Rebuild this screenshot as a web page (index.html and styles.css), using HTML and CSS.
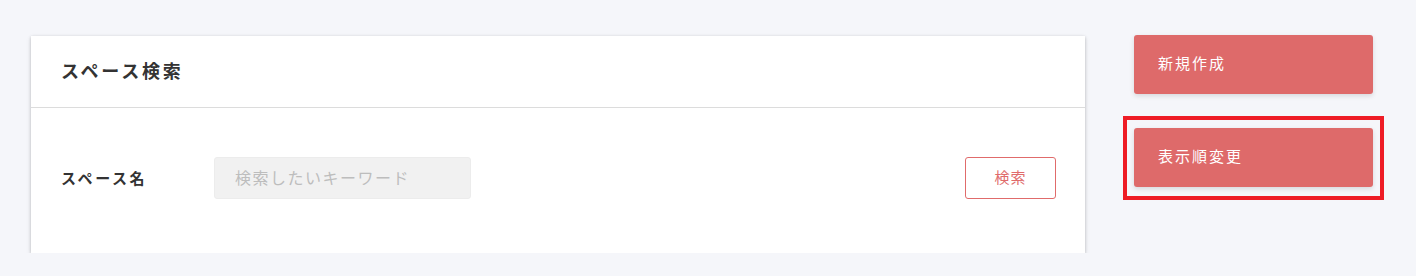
FILE: index.html
```html
<!DOCTYPE html>
<html lang="ja">
<head>
<meta charset="utf-8">
<link rel="stylesheet" href="styles.css">
</head>
<body>
<div class="page">
  <section class="card">
    <header class="card-head">
      <h2 class="card-title">スペース検索</h2>
    </header>
    <div class="card-body">
      <label class="field-label">スペース名</label>
      <input class="field-input" type="text" placeholder="検索したいキーワード">
      <button class="btn-outline">検索</button>
    </div>
  </section>
  <aside class="side">
    <button class="btn-fill">新規作成</button>
    <div class="highlight">
      <button class="btn-fill">表示順変更</button>
    </div>
  </aside>
</div>
</body>
</html>
```
FILE: styles.css
```css
html, body {
  margin: 0;
  padding: 0;
  background: #f5f6fa;
  font-family: "Noto Sans CJK JP", "Noto Sans", sans-serif;
  color: #333;
}
.page {
  display: flex;
  align-items: flex-start;
  padding: 35px 0 0 31px;
  gap: 49px;
}
.card {
  width: 1054px;
  margin-top: 1px;
  background: #fff;
  box-shadow: 0 1px 3px rgba(0,0,0,0.22), 0 2px 6px rgba(0,0,0,0.08);
}
.card-head {
  box-sizing: border-box;
  height: 72px;
  border-bottom: 1px solid #dcdcdc;
  display: flex;
  align-items: center;
  padding: 0 0 4px 30px;
}
.card-title {
  margin: 0;
  font-size: 18px;
  font-weight: 700;
  letter-spacing: 2.8px;
  line-height: 1;
  color: #333;
}
.card-body {
  box-sizing: border-box;
  height: 145px;
  display: flex;
  align-items: center;
  padding: 0 29px 5px 30px;
}
.field-label {
  width: 153px;
  font-size: 15px;
  font-weight: 700;
  letter-spacing: 2.6px;
  line-height: 1;
  padding-bottom: 2px;
  color: #333;
}
.field-input {
  width: 257px;
  height: 42px;
  box-sizing: border-box;
  border: 1px solid #ececec;
  border-radius: 3px;
  background: #f1f1f1;
  padding: 0 20px 2px;
  font-family: inherit;
  font-size: 16px;
  letter-spacing: 1.5px;
  color: #333;
  outline: none;
}
.field-input::placeholder {
  color: #bdbdbd;
}
.btn-outline {
  margin-left: auto;
  width: 91px;
  height: 42px;
  box-sizing: border-box;
  background: #fff;
  border: 1px solid #e06b6b;
  border-radius: 3px;
  color: #e06b6b;
  font-family: inherit;
  font-size: 15px;
  letter-spacing: 1px;
  line-height: 1;
  padding: 0 0 3px;
  cursor: pointer;
}
.side {
  display: flex;
  flex-direction: column;
  width: 239px;
  gap: 22px;
}
.btn-fill {
  width: 239px;
  height: 59px;
  background: #de6a6a;
  border: none;
  border-radius: 3px;
  box-shadow: 0 2px 5px rgba(0,0,0,0.12);
  color: #fff;
  text-align: left;
  padding: 0 0 5px 24px;
  font-family: inherit;
  font-size: 15px;
  letter-spacing: 2px;
  line-height: 1;
  cursor: pointer;
}
.highlight {
  margin-left: -11px;
  width: 239px;
  border: 4px solid #ee1c25;
  padding: 8px 7px 9px 7px;
}
```
